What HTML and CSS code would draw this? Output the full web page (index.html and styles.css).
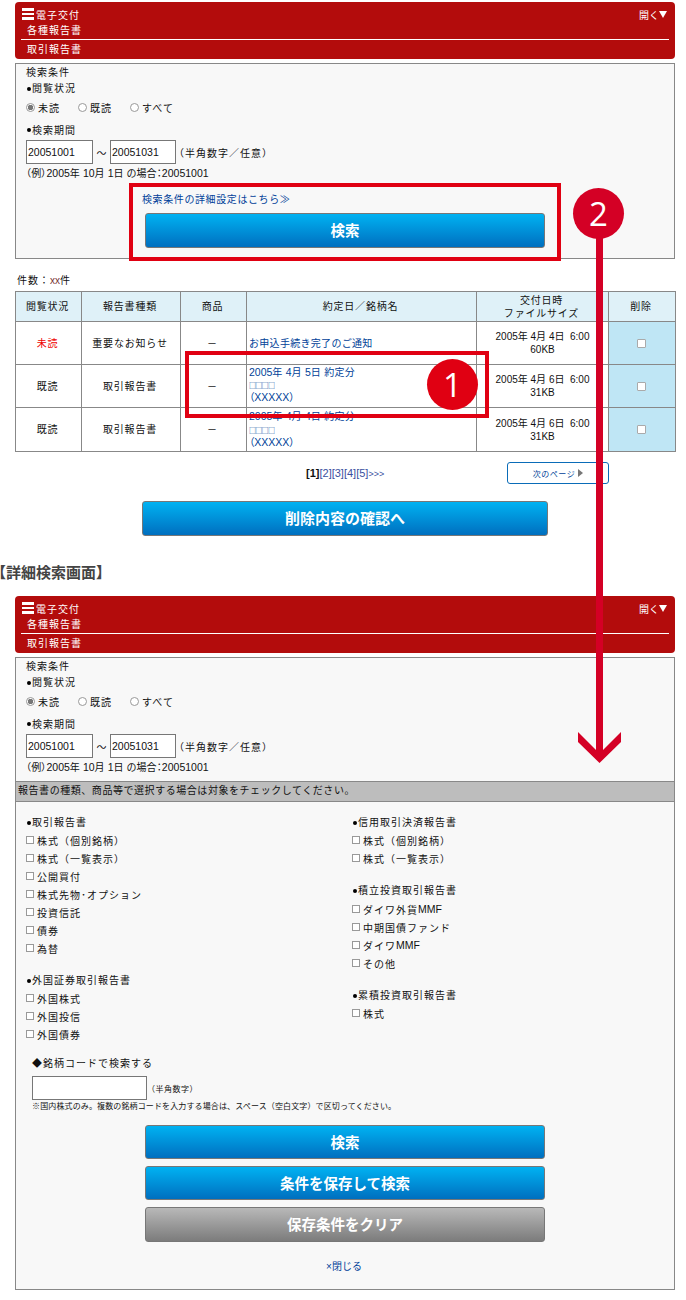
FILE: index.html
```html
<!DOCTYPE html>
<html lang="ja">
<head>
<meta charset="utf-8">
<title>電子交付 取引報告書</title>
<link rel="stylesheet" href="styles.css">
</head>
<body>
<div class="page">
  <header class="bar">
    <div class="bar-top">
      <span class="burger"><i></i><i></i><i></i></span>
      <span class="bar-title">電子交付</span>
      <span class="bar-open">開く<svg class="tri" viewBox="0 0 8 7" width="8" height="7"><path d="M0 0H8L4 7Z"/></svg></span>
    </div>
    <div class="bar-sub">各種報告書</div>
    <div class="bar-sub2">取引報告書</div>
  </header>
  <section class="panel">
    <div class="p-cap">検索条件</div>
    <div class="p-head"><b class="dot"></b>閲覧状況</div>
    <div class="radios">
      <label class="radio"><input type="radio" name="a" checked>未読</label>
      <label class="radio"><input type="radio" name="a">既読</label>
      <label class="radio"><input type="radio" name="a">すべて</label>
    </div>
    <div class="p-head period"><b class="dot"></b>検索期間</div>
    <div class="dates">
      <input class="date d1" type="text" value="20051001"><span class="tilde">～</span><input class="date d2" type="text" value="20051031"><span class="note">（半角数字／任意）</span>
    </div>
    <div class="example">（例）<span class="lat">2005</span>年 <span class="lat">10</span>月 <span class="lat">1</span>日 の場合：<span class="lat">20051001</span></div>
    <div class="detail-link"><a href="#">検索条件の詳細設定はこちら≫</a></div>
    <button class="btn btn-search" type="button">検索</button>
  </section>

  <div class="count">件数：<span class="lat red-x">xx</span>件</div>
  <table class="list">
    <colgroup><col class="c1"><col class="c2"><col class="c3"><col class="c4"><col class="c5"><col class="c6"></colgroup>
    <thead>
      <tr class="rh"><th>閲覧状況</th><th>報告書種類</th><th>商品</th><th>約定日／銘柄名</th><th>交付日時<br>ファイルサイズ</th><th>削除</th></tr>
    </thead>
    <tbody>
      <tr class="r1">
        <td class="unread">未読</td><td>重要なお知らせ</td><td>－</td>
        <td class="name"><a href="#">お申込手続き完了のご通知</a></td>
        <td class="when"><span class="lat">2005</span>年 <span class="lat">4</span>月 <span class="lat">4</span>日&nbsp; <span class="lat">6:00</span><br><span class="lat">60KB</span></td>
        <td class="del"><input class="chk-del" type="checkbox"></td>
      </tr>
      <tr class="r2">
        <td>既読</td><td>取引報告書</td><td>－</td>
        <td class="name"><a href="#"><span class="lat">2005</span>年 <span class="lat">4</span>月 <span class="lat">5</span>日 約定分<br><small class="sq">□□□□</small><br><span class="xs">（XXXXX）</span></a></td>
        <td class="when"><span class="lat">2005</span>年 <span class="lat">4</span>月 <span class="lat">6</span>日&nbsp; <span class="lat">6:00</span><br><span class="lat">31KB</span></td>
        <td class="del"><input class="chk-del" type="checkbox"></td>
      </tr>
      <tr class="r3">
        <td>既読</td><td>取引報告書</td><td>－</td>
        <td class="name"><a href="#"><span class="lat">2005</span>年 <span class="lat">4</span>月 <span class="lat">4</span>日 約定分<br><small class="sq">□□□□</small><br><span class="xs">（XXXXX）</span></a></td>
        <td class="when"><span class="lat">2005</span>年 <span class="lat">4</span>月 <span class="lat">6</span>日&nbsp; <span class="lat">6:00</span><br><span class="lat">31KB</span></td>
        <td class="del"><input class="chk-del" type="checkbox"></td>
      </tr>
    </tbody>
  </table>

  <div class="pager-row">
    <div class="pager lat"><b>[1]</b><a href="#">[2]</a><a href="#">[3]</a><a href="#">[4]</a><a href="#">[5]</a><a href="#">&gt;&gt;&gt;</a></div>
    <a class="next" href="#">次のページ<svg class="next-tri" viewBox="0 0 5 8" width="5" height="8"><path d="M0 0L5 4L0 8Z"/></svg></a>
  </div>
  <button class="btn btn-confirm" type="button">削除内容の確認へ</button>

  <h2 class="screen-title">【詳細検索画面】</h2>

  <header class="bar">
    <div class="bar-top">
      <span class="burger"><i></i><i></i><i></i></span>
      <span class="bar-title">電子交付</span>
      <span class="bar-open">開く<svg class="tri" viewBox="0 0 8 7" width="8" height="7"><path d="M0 0H8L4 7Z"/></svg></span>
    </div>
    <div class="bar-sub">各種報告書</div>
    <div class="bar-sub2">取引報告書</div>
  </header>
  <section class="panel panel-full">
    <div class="p-cap">検索条件</div>
    <div class="p-head"><b class="dot"></b>閲覧状況</div>
    <div class="radios">
      <label class="radio"><input type="radio" name="b" checked>未読</label>
      <label class="radio"><input type="radio" name="b">既読</label>
      <label class="radio"><input type="radio" name="b">すべて</label>
    </div>
    <div class="p-head period"><b class="dot"></b>検索期間</div>
    <div class="dates">
      <input class="date d1" type="text" value="20051001"><span class="tilde">～</span><input class="date d2" type="text" value="20051031"><span class="note">（半角数字／任意）</span>
    </div>
    <div class="example">（例）<span class="lat">2005</span>年 <span class="lat">10</span>月 <span class="lat">1</span>日 の場合：<span class="lat">20051001</span></div>
    <div class="band">報告書の種類、商品等で選択する場合は対象をチェックしてください。</div>
    <div class="cols">
      <div class="col">
        <div class="grp">
          <div class="grp-h"><b class="dot"></b>取引報告書</div>
          <label class="ck"><input type="checkbox">株式（個別銘柄）</label>
          <label class="ck"><input type="checkbox">株式（一覧表示）</label>
          <label class="ck"><input type="checkbox">公開買付</label>
          <label class="ck"><input type="checkbox">株式先物･オプション</label>
          <label class="ck"><input type="checkbox">投資信託</label>
          <label class="ck"><input type="checkbox">債券</label>
          <label class="ck"><input type="checkbox">為替</label>
        </div>
        <div class="grp g-foreign">
          <div class="grp-h"><b class="dot"></b>外国証券取引報告書</div>
          <label class="ck"><input type="checkbox">外国株式</label>
          <label class="ck"><input type="checkbox">外国投信</label>
          <label class="ck"><input type="checkbox">外国債券</label>
        </div>
      </div>
      <div class="col">
        <div class="grp">
          <div class="grp-h"><b class="dot"></b>信用取引決済報告書</div>
          <label class="ck"><input type="checkbox">株式（個別銘柄）</label>
          <label class="ck"><input type="checkbox">株式（一覧表示）</label>
        </div>
        <div class="grp g-tsumi">
          <div class="grp-h"><b class="dot"></b>積立投資取引報告書</div>
          <label class="ck ck-first"><input type="checkbox">ダイワ外貨<span class="lat">MMF</span></label>
          <label class="ck"><input type="checkbox">中期国債ファンド</label>
          <label class="ck"><input type="checkbox">ダイワ<span class="lat">MMF</span></label>
          <label class="ck"><input type="checkbox">その他</label>
        </div>
        <div class="grp g-rui">
          <div class="grp-h"><b class="dot"></b>累積投資取引報告書</div>
          <label class="ck"><input type="checkbox">株式</label>
        </div>
      </div>
    </div>
    <div class="code">
      <div class="code-h">◆銘柄コードで検索する</div>
      <div class="code-row"><input class="code-in" type="text"><span class="code-note">（半角数字）</span></div>
      <div class="code-foot">※国内株式のみ。複数の銘柄コードを入力する場合は、スペース（空白文字）で区切ってください。</div>
    </div>
    <div class="actions">
      <button class="btn btn-a" type="button">検索</button>
      <button class="btn btn-a" type="button">条件を保存して検索</button>
      <button class="btn btn-a btn-gray" type="button">保存条件をクリア</button>
    </div>
    <div class="close"><a href="#">×閉じる</a></div>
  </section>
</div>

<div class="mark mark-1"></div>
<div class="badge badge-1">1</div>
<div class="mark mark-2"></div>
<svg class="arrow" viewBox="0 0 44 530" width="44" height="530"><path d="M18 0H25V512L43 494V504L21.500 525L0 504V494L18 512Z"/></svg>
<div class="badge badge-2">2</div>
</body>
</html>
```
FILE: styles.css
```css
* { box-sizing: border-box; }
html, body { margin: 0; padding: 0; background: #fff; }
body {
  font-family: "Liberation Sans", "Noto Sans CJK JP", sans-serif;
  font-size: 10px;
  letter-spacing: 1px;
  color: #111;
  position: relative;
  height: 1300px;
  overflow: hidden;
}
a { color: #003f98; text-decoration: none; }
.lat { letter-spacing: 0; font-size: 10.500px; }
.page { width: 675px; padding: 2px 0 0 15px; }

/* red header */
.bar { background: #b30c0c; color: #fff; height: 57px; border-radius: 4px; padding: 4px 6px 0; }
.bar-top { display: flex; align-items: center; height: 16px; }
.burger { width: 12px; margin-left: 1px; display: flex; flex-direction: column; gap: 2px; }
.burger i { display: block; height: 2.500px; background: #fff; }
.bar-title { margin-left: 2px; }
.bar-open { margin-left: auto; margin-right: 2px; display: flex; align-items: center; letter-spacing: 0; gap: 0; }
.tri { fill: #fff; }
.bar-sub { line-height: 17px; padding-left: 6px; border-bottom: 1px solid #fff; height: 18px; }
.bar-sub2 { height: 19px; line-height: 20px; padding-left: 6px; }

/* search panel */
.panel { margin-top: 4px; width: 660px; height: 196px; border: 1px solid #888; background: #f8f8f8; }
.panel-full { height: 633px; }
.p-cap { height: 17px; line-height: 17px; padding-left: 10px; }
.p-head { height: 15px; line-height: 15px; padding-left: 10px; display: flex; align-items: center; }
.dot { width: 4px; height: 4px; border-radius: 50%; background: #000; margin: 0 1px 0 1px; }
.radios { display: flex; height: 20px; margin-top: 1px; padding-left: 10px; align-items: center; }
.radio { display: flex; align-items: center; width: 52px; }
.radio input {
  appearance: none; width: 9px; height: 9px; margin: 0 3px 0 0; border: 1px solid #999; border-radius: 50%; background: #fff;
}
.radio input:checked { background: radial-gradient(circle, #777 0 2.500px, #fff 3px); }
.period { margin-top: 5px; height: 16px; }
.dates { display: flex; align-items: center; height: 24px; margin-top: 2px; padding-left: 10px; }
.date {
  height: 24px; border: 1px solid #777; background: #fff; padding: 0 1px; margin: 0;
  font: 10.500px "Liberation Sans", sans-serif; letter-spacing: 0; color: #111;
}
.d1 { width: 67px; }
.d2 { width: 66px; }
.tilde { width: 17px; text-align: center; letter-spacing: 0; font-size: 10px; }
.note { margin-left: -2px; }
.example { height: 18px; line-height: 18px; padding-left: 10px; letter-spacing: .15px; font-size: 10px; font-feature-settings: "palt"; }
.detail-link { margin: 9px 0 0 126px; height: 18px; line-height: 18px; letter-spacing: .6px; }
.btn {
  display: block; margin: 0; padding: 0 0 2px; border: 1px solid #777; border-radius: 3px;
  background: linear-gradient(#00b2f2, #006fbf); color: #fff;
  font: bold 14.500px "Liberation Sans", "Noto Sans CJK JP", sans-serif; letter-spacing: 0;
}
.btn-search { width: 400px; height: 35px; margin: 4px 0 0 129px; }

/* list */
.count { margin-top: 14px; height: 16px; line-height: 16px; padding-left: 2px; }
.red-x { color: #733; font-size: 10px; }
.list { margin-top: 2px; width: 660px; border-collapse: collapse; table-layout: fixed; background: #fff; }
.c1 { width: 66px; } .c2 { width: 99px; } .c3 { width: 66px; } .c4 { width: 230px; } .c5 { width: 132px; } .c6 { width: 67px; }
.list th, .list td { border: 1px solid #888; padding: 0 2px 0 0; text-align: center; font-weight: normal; line-height: 13px; letter-spacing: .8px; }
.list th { background: #dff1f8; }
.rh { height: 30px; }
.r1 { height: 43px; } .r2 { height: 43px; } .r3 { height: 44px; }
.list .unread { color: #e00; }
.list .name { text-align: left; padding: 0 0 0 2px; line-height: 12px; vertical-align: middle; overflow: hidden; letter-spacing: .3px; }
.r2 .name, .r3 .name { vertical-align: top; }
.list .r1 .name { padding-top: 1px; }
.list .r2 .name { padding-top: 1px; }
.list .r3 .name { padding-top: 2px; line-height: 13px; }
.sq { font-family: "Noto Sans CJK JP", sans-serif; font-size: 7px; letter-spacing: -.7px; line-height: 11px; }
.xs { font-feature-settings: "palt"; letter-spacing: 0; font-size: 10.500px; }
.list .when { letter-spacing: 0; line-height: 13px; padding: 0; }
.when .lat { font-size: 10px; }
.list .del { background: #bfe6f5; padding: 0; }
.chk-del { appearance: none; display: block; width: 9px; height: 9px; margin: 0 auto; border: 1px solid #aaa; border-radius: 1px; background: #fff; transform: translateX(-1px); }

.pager-row { display: flex; align-items: center; width: 594px; margin-top: 10px; height: 22px; padding-left: 291px; }
.pager { letter-spacing: 0; font-size: 11px; color: #111; white-space: nowrap; }
.pager a { color: #3a4fa0; }
.pager a:last-child { font-size: 9px; }
.next {
  margin-left: auto; width: 102px; height: 22px; border: 1px solid #0a6cb8; border-radius: 3px; background: #fff;
  display: flex; align-items: center; justify-content: center; gap: 3px; font-size: 8px; letter-spacing: .5px; color: #003f98;
}
.next-tri { fill: #777; }
.btn-confirm { width: 406px; height: 35px; margin: 17px 0 0 127px; font-size: 15px; }
.screen-title { margin: 26px 0 0 -24px; height: 22px; line-height: 22px; font-size: 15px; font-weight: bold; color: #444; letter-spacing: 0; }
.page .screen-title + .bar { margin-top: 12px; }

/* detail */
.band {
  height: 21px; line-height: 18px; padding-left: 2px; background: #bdbdbd;
  border-top: 1px solid #888; border-bottom: 1px solid #888; letter-spacing: .55px; margin-top: 5px;
}
.cols { display: flex; padding: 12px 0 0 10px; }
.col { flex: 0 0 326px; }
.grp-h { height: 17px; line-height: 17px; display: flex; align-items: center; }
.ck { display: flex; align-items: center; height: 18px; }
.ck input { appearance: none; width: 8px; height: 8px; margin: 0 3px 0 0; border: 1px solid #999; background: #fff; }
.g-foreign { margin-top: 15px; }
.g-tsumi { margin-top: 15px; }
.ck-first { margin-top: 1px; }
.g-rui { margin-top: 15px; }
.code { padding-left: 16px; margin-top: 12px; }
.code-h { height: 18px; line-height: 18px; }
.code-row { display: flex; align-items: center; margin-top: 3px; }
.code-in { width: 115px; height: 24px; margin: 0; border: 1px solid #777; background: #fff; }
.code-note { font-size: 8px; letter-spacing: .5px; margin-left: 0; }
.code-foot { height: 14px; line-height: 14px; font-size: 8px; letter-spacing: .13px; white-space: nowrap; }
.actions { margin: 11px 0 0 129px; display: flex; flex-direction: column; gap: 7px; }
.btn-a { width: 400px; height: 34px; }
.btn-gray { background: linear-gradient(#b8b8b8, #7c7c7c); height: 35px; }
.close { margin-top: 16px; text-align: center; height: 18px; line-height: 18px; letter-spacing: 0; padding-right: 2px; }

/* annotation overlays */
.mark { position: absolute; border: 4px solid #e00012; }
.mark-1 { left: 185px; top: 351px; width: 304px; height: 67px; }
.mark-2 { left: 129px; top: 183px; width: 432px; height: 78px; }
.badge {
  position: absolute; width: 51px; height: 51px; border-radius: 50%; color: #fff;
  font: 33px/51px "Open Sans", sans-serif; letter-spacing: 0; text-align: center;
}
.badge-1 { left: 427px; top: 359px; background: #e00012; }
.badge-2 { left: 573px; top: 188px; background: #d40025; }
.arrow { position: absolute; left: 577.500px; top: 238px; fill: #d40025; }
```
